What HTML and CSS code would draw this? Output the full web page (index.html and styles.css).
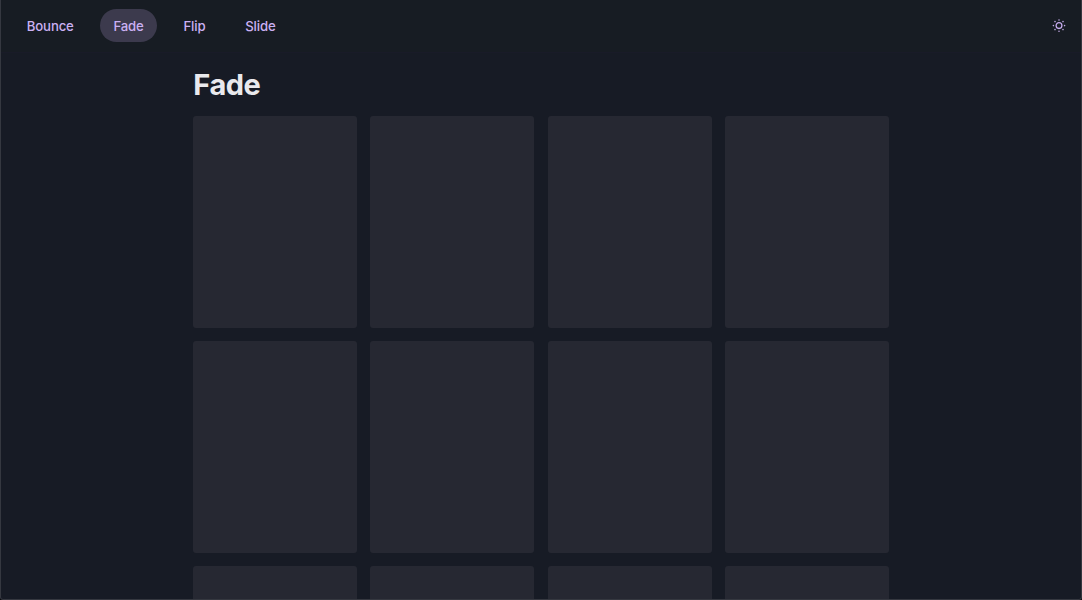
FILE: index.html
```html
<!DOCTYPE html>
<html lang="en">
<head>
<meta charset="utf-8">
<title>Fade</title>
<link rel="stylesheet" href="styles.css">
</head>
<body>
<div class="window">
  <header class="header">
    <nav class="nav">
      <a class="link">Bounce</a>
      <a class="link active">Fade</a>
      <a class="link">Flip</a>
      <a class="link">Slide</a>
    </nav>
    <svg class="sun" viewBox="0 0 14 14" aria-label="Toggle theme">
      <circle class="sun-ring" cx="7" cy="6.6" r="2.9"/>
      <g class="sun-rays">
        <circle cx="7" cy="1" r=".8"/><circle cx="7" cy="12.2" r=".8"/>
        <circle cx="1.4" cy="6.6" r=".8"/><circle cx="12.6" cy="6.6" r=".8"/>
        <circle cx="3" cy="2.6" r=".8"/><circle cx="11" cy="2.6" r=".8"/>
        <circle cx="3" cy="10.6" r=".8"/><circle cx="11" cy="10.6" r=".8"/>
      </g>
    </svg>
  </header>
  <main class="main">
    <h1 class="title">Fade</h1>
    <div class="grid">
      <div class="card"></div><div class="card"></div><div class="card"></div><div class="card"></div>
      <div class="card"></div><div class="card"></div><div class="card"></div><div class="card"></div>
      <div class="card"></div><div class="card"></div><div class="card"></div><div class="card"></div>
    </div>
  </main>
</div>
</body>
</html>
```
FILE: styles.css
```css
* { box-sizing: border-box; }
body {
  margin: 0;
  background: #05070a;
  font-family: Inter, "Liberation Sans", sans-serif;
}
.window {
  height: 600px;
  overflow: hidden;
  background: #171b25;
  border: 1px solid #353840;
  border-top: 0;
  border-radius: 0 0 3px 3px;
}
.header {
  height: 53px;
  padding: 0 15px 1px 12px;
  display: flex;
  align-items: center;
  justify-content: space-between;
  background: #171c23;
  border-bottom: 1px solid #191b28;
}
.nav { display: flex; gap: 13.2px; }
.link {
  height: 33px;
  padding: 1px 13.3px 0;
  border-radius: 17px;
  font-size: 13.2px;
  font-weight: 500;
  line-height: 33px;
  letter-spacing: -0.16px;
  color: #cbb0f3;
}
.link:first-child { padding-left: 13.8px; }
.active { background: #3c3a4d; }
.sun { width: 14px; height: 14px; }
.sun-ring { fill: none; stroke: #c6abed; stroke-width: 1.3; }
.sun-rays { fill: #bca4e0; }
.main { width: 695.4px; margin: 0 auto; }
.title {
  margin: 0;
  padding-top: 13px;
  height: 63px;
  font-size: 29px;
  font-weight: 700;
  line-height: 38px;
  letter-spacing: -0.45px;
  color: #e9e9ed;
}
.grid {
  display: grid;
  grid-template-columns: repeat(4, 1fr);
  grid-auto-rows: 212px;
  gap: 13.2px;
}
.card { background: #262832; border-radius: 3px; }
```
